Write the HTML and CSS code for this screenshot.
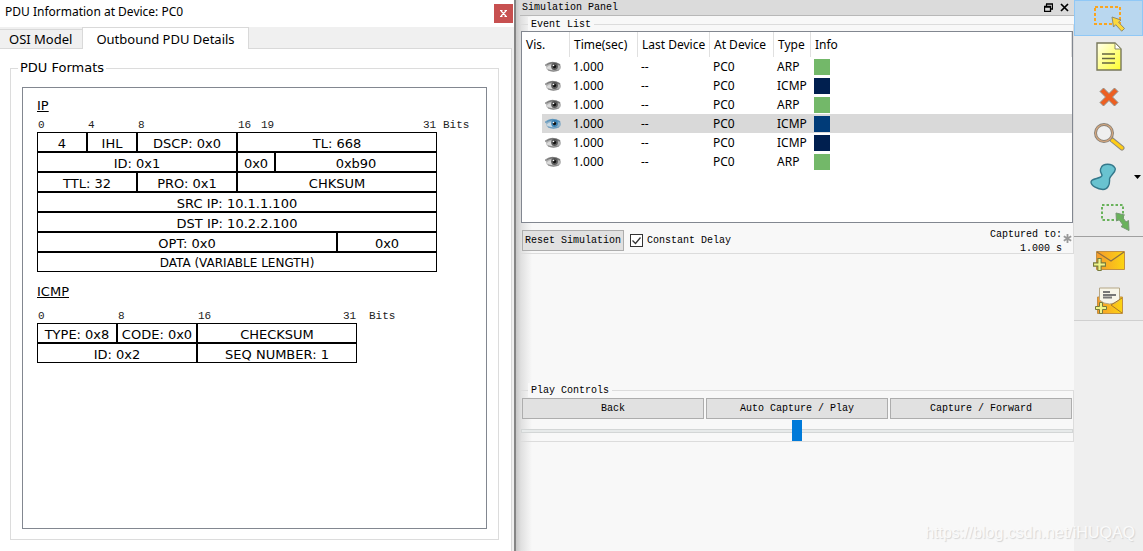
FILE: index.html
```html
<!DOCTYPE html>
<html lang="en">
<head>
<meta charset="utf-8">
<title>Simulation Panel</title>
<link rel="stylesheet" href="styles.css">
</head>
<body>
<svg class="defs" aria-hidden="true">
  <defs>
    <linearGradient id="note" x1="0" y1="0" x2="1" y2="1"><stop offset="0" stop-color="#fffff0"/><stop offset="1" stop-color="#ffff2a"/></linearGradient>
    <linearGradient id="mail" x1="0" y1="0" x2="1" y2="0"><stop offset="0" stop-color="#f69a2c"/><stop offset="1" stop-color="#fcd512"/></linearGradient>
    <symbol id="eye" viewBox="0 0 16 12">
      <ellipse cx="8.5" cy="6" rx="7.500" ry="5" fill="currentColor" opacity=".4"/>
      <path d="M0 4.500Q7-1 15 4" fill="none" stroke="currentColor" stroke-width="1.600" opacity=".55"/>
      <path d="M1 7Q4 3.500 8 4L7 9Q4 9 1 7Z" fill="#fff" opacity=".5"/>
      <circle cx="9.500" cy="5.500" r="3.400" fill="currentColor" opacity=".8"/>
      <circle cx="9.500" cy="5.500" r="1.700" fill="#111"/>
      <circle cx="8.500" cy="4.500" r=".8" fill="#fff"/>
      <path d="M3 9Q8 11 14 9" fill="none" stroke="currentColor" opacity=".4"/>
    </symbol>
    <symbol id="plus" viewBox="0 0 12 12">
      <path d="M4.500.5h3v4h4v3h-4v4h-3v-4h-4v-3h4z" fill="#eef58a" stroke="#777a3c"/>
    </symbol>
  </defs>
</svg>
<div class="app">
  <section class="dialog">
    <header class="dialog-title">
      <h1>PDU Information at Device: PC0</h1>
      <button class="close" aria-label="Close"><svg width="7" height="7" viewBox="0 0 7 7"><path d="M1 1l5 5M6 1L1 6M0 .5h2.500M4.500.5H7M0 6.500h2.500M4.500 6.500H7" stroke="#fff" stroke-width="1.200"/></svg></button>
    </header>
    <nav class="tabs">
      <button class="tab">OSI Model</button>
      <button class="tab active">Outbound PDU Details</button>
      <span class="tab-rest"></span>
    </nav>
    <div class="pane">
      <fieldset class="group formats">
        <legend>PDU Formats</legend>
        <div class="sheet">
          <h2>IP</h2>
          <div class="ruler ruler-ip"><span>0</span><span>4</span><span>8</span><span>16</span><span>19</span><span>31</span><span>Bits</span></div>
          <table class="packet packet-ip">
            <colgroup><col class="w50"><col class="w50"><col class="w100"><col class="w38"><col class="w62"><col class="w100"></colgroup>
            <tr><td>4</td><td>IHL</td><td>DSCP: 0x0</td><td colspan="3">TL: 668</td></tr>
            <tr><td colspan="3">ID: 0x1</td><td>0x0</td><td colspan="2">0xb90</td></tr>
            <tr><td colspan="2">TTL: 32</td><td>PRO: 0x1</td><td colspan="3">CHKSUM</td></tr>
            <tr><td colspan="6">SRC IP: 10.1.1.100</td></tr>
            <tr><td colspan="6">DST IP: 10.2.2.100</td></tr>
            <tr><td colspan="5">OPT: 0x0</td><td>0x0</td></tr>
            <tr class="small"><td colspan="6">DATA (VARIABLE LENGTH)</td></tr>
          </table>
          <h2 class="second">ICMP</h2>
          <div class="ruler ruler-icmp"><span>0</span><span>8</span><span>16</span><span>31</span><span>Bits</span></div>
          <table class="packet packet-icmp">
            <colgroup><col class="w80"><col class="w80"><col class="w160"></colgroup>
            <tr><td>TYPE: 0x8</td><td>CODE: 0x0</td><td>CHECKSUM</td></tr>
            <tr><td colspan="2">ID: 0x2</td><td>SEQ NUMBER: 1</td></tr>
          </table>
        </div>
      </fieldset>
    </div>
  </section>

  <section class="sim">
    <header class="sim-title">
      <h1>Simulation Panel</h1>
      <button aria-label="Float"><svg width="9" height="9" viewBox="0 0 9 9"><path d="M2.500 3V1M2 1h7M8.500 1v5H7M.5 3.500h6v5h-6zM0 4h7" fill="none" stroke="#000" stroke-width="1.300"/></svg></button>
      <button aria-label="Close panel"><svg width="9" height="9" viewBox="0 0 9 9"><path d="M1 1l7 7M8 1L1 8" stroke="#000" stroke-width="1.700"/></svg></button>
    </header>
    <fieldset class="group events">
      <legend>Event List</legend>
      <div class="list">
        <table class="event-table">
          <colgroup><col class="c-vis"><col class="c-time"><col class="c-last"><col class="c-at"><col class="c-type"><col></colgroup>
          <thead><tr><th>Vis.</th><th>Time(sec)</th><th>Last Device</th><th>At Device</th><th>Type</th><th>Info</th></tr></thead>
          <tbody>
            <tr><td><svg class="eye"><use href="#eye"/></svg></td><td>1.000</td><td>--</td><td>PC0</td><td>ARP</td><td><span class="swatch green"></span></td></tr>
            <tr><td><svg class="eye"><use href="#eye"/></svg></td><td>1.000</td><td>--</td><td>PC0</td><td>ICMP</td><td><span class="swatch navy"></span></td></tr>
            <tr><td><svg class="eye"><use href="#eye"/></svg></td><td>1.000</td><td>--</td><td>PC0</td><td>ARP</td><td><span class="swatch green"></span></td></tr>
            <tr class="selected"><td><svg class="eye"><use href="#eye"/></svg></td><td>1.000</td><td>--</td><td>PC0</td><td>ICMP</td><td><span class="swatch blue"></span></td></tr>
            <tr><td><svg class="eye"><use href="#eye"/></svg></td><td>1.000</td><td>--</td><td>PC0</td><td>ICMP</td><td><span class="swatch navy"></span></td></tr>
            <tr><td><svg class="eye"><use href="#eye"/></svg></td><td>1.000</td><td>--</td><td>PC0</td><td>ARP</td><td><span class="swatch green"></span></td></tr>
          </tbody>
        </table>
      </div>
      <div class="event-foot">
        <button class="push">Reset Simulation</button>
        <label class="check"><input type="checkbox" checked><span>Constant Delay</span></label>
        <p class="captured">Captured to:<br>1.000 s</p>
        <svg class="star" width="9" height="9" viewBox="0 0 9 9"><path d="M4.500 0v9M.8 2.200l7.400 4.600M8.200 2.200L.8 6.800" stroke="#999" stroke-width="1.800"/></svg>
      </div>
    </fieldset>
    <fieldset class="group play">
      <legend>Play Controls</legend>
      <div class="play-buttons">
        <button class="push">Back</button>
        <button class="push">Auto Capture / Play</button>
        <button class="push">Capture / Forward</button>
      </div>
      <input class="speed" type="range" min="0" max="100" value="50" aria-label="Play speed">
    </fieldset>
  </section>

  <aside class="side">
    <div class="tools">
      <button class="tool current" aria-label="Select"><svg width="32" height="30" viewBox="0 0 32 30"><rect x="2" y="4" width="25" height="17" fill="none" stroke="#faa51e" stroke-width="2" stroke-dasharray="3 2"/><path d="M19 14l9 3-2.500 2.200 6 6.300-2.800 2.700-6-6.500-2.200 2.300z" fill="#fbd83c" stroke="#8f8b70"/></svg></button>
      <button class="tool" aria-label="Place Note"><svg width="26" height="30" viewBox="0 0 26 30"><path d="M1 1h18l6 6v21H1z" fill="url(#note)" stroke="#77775a" stroke-width="1.400"/><path d="M19 1v6h6z" fill="#fff" stroke="#8b8b62"/><path d="M6 12h13M6 16.500h13M6 21h13" stroke="#666642" stroke-width="1.500"/></svg></button>
      <button class="tool" aria-label="Delete"><svg width="20" height="20" viewBox="0 0 20 20"><path d="M1 4.500L4.500 1 10 6.500 15.500 1 19 4.500 13.500 10l5.500 5.500-3.500 3.500-5.500-5.500L4.500 19 1 15.500 6.500 10z" fill="#ed5f21" stroke="#94938c"/></svg></button>
      <button class="tool" aria-label="Inspect"><svg width="32" height="30" viewBox="0 0 32 30"><path d="M18 17l11 9" stroke="#8e887d" stroke-width="5" stroke-linecap="round"/><path d="M19 18l10 8" stroke="#ffcd16" stroke-width="3" stroke-linecap="round"/><circle cx="11" cy="11" r="8.500" fill="#efefef" stroke="#888278" stroke-width="3"/><circle cx="11" cy="11" r="8.500" fill="none" stroke="#d8a77d" stroke-width="1.200"/></svg></button>
      <button class="tool shape" aria-label="Draw Shape"><svg width="26" height="28" viewBox="0 0 26 28"><path d="M11 5C13 0 22 0 25 5C27 9 20 12 19.500 16C20 21 18 26.500 13 26.500C8 26 1 23 1 19C1 15 11 16 12 12.500C12 10 9 9 11 5Z" fill="#69c3d0" stroke="#34788b" stroke-width="1.400"/></svg><svg class="arrow" width="7" height="4" viewBox="0 0 7 4"><path d="M0 0h7L3.500 4z"/></svg></button>
      <button class="tool resize" aria-label="Resize"><svg width="30" height="30" viewBox="0 0 30 30"><path d="M2 3h21v15H2z" fill="none" stroke="#69b25b" stroke-width="2" stroke-dasharray="2.500 2"/><path d="M16 11l8.500 2-2.200 2 3.700 5 2.500-1.500.5 10-8-4 2-1.500-4-5.500-2.500 1.500z" fill="#69b25b" stroke="#769873"/></svg></button>
    </div>
    <div class="tools pdus">
      <button class="tool" aria-label="Add Simple PDU"><svg width="32" height="22" viewBox="0 0 32 22"><path d="M3.500 1.500h28v18h-28z" fill="url(#mail)" stroke="#c29043"/><path d="M4 2l14 9L31 2" fill="none" stroke="#8e7043" stroke-width="1.200"/><use href="#plus" x="0" y="8" width="13" height="13"/></svg></button>
      <button class="tool" aria-label="Add Complex PDU"><svg width="30" height="28" viewBox="0 0 30 28"><path d="M3.500 10h25v16.500h-25z" fill="url(#mail)" stroke="#c29043"/><path d="M5.500 1h20v12q-4 4-10 4T5.500 13z" fill="#f7f5e9" stroke="#b5a787"/><path d="M9 5h7M9 8h13M9 10.500h9" stroke="#777" stroke-width="1.800"/><path d="M17 18l11 8M17 18l11-7" stroke="#a77728"/><use href="#plus" x="1" y="15" width="12" height="12"/></svg></button>
    </div>
  </aside>
</div>
<p class="watermark">https://blog.csdn.net/iHUQAQ</p>
</body>
</html>
```
FILE: styles.css
```css
* { box-sizing: border-box; }
body {
  margin: 0;
  background: #f8f8f8;
  color: #000;
  font-family: "DejaVu Sans", sans-serif;
  font-size: 12px;
}
h1, h2, p { margin: 0; font-weight: normal; }
button { margin: 0; padding: 0; border: 0; background: none; color: inherit; font: inherit; }
svg { display: block; }
.defs { position: absolute; width: 0; height: 0; }

.app {
  display: grid;
  grid-template-columns: minmax(0, 516fr) minmax(0, 558fr) 69px;
  min-height: 100vh;
}

/* PDU dialog */
.dialog {
  display: flex;
  flex-direction: column;
  background: #f0f0f0;
  border-right: 2px solid #858585;
}
.dialog-title {
  display: flex;
  justify-content: space-between;
  align-items: flex-start;
  height: 27px;
  padding: 4px 1px 0 5px;
  background: #fff;
}
.dialog-title h1 { font: 12px/16px "Noto Sans", sans-serif; }
.close {
  display: grid;
  place-items: center;
  width: 19px;
  height: 19px;
  background: #c75050;
}
.tabs { display: flex; align-items: flex-end; height: 22px; padding-right: 2px; }
.tab {
  height: 20px;
  padding: 0 10px 0 9px;
  border: solid #d9d9d9;
  border-width: 1px 0;
  font: 13px/18px "Noto Sans", sans-serif;
}
.tab.active {
  height: 22px;
  padding: 0 13px;
  border-width: 1px 1px 0;
  background: #fff;
}
.tab-rest { flex: 1; border-bottom: 1px solid #d9d9d9; }
.pane {
  display: flex;
  flex: 1;
  margin-right: 2px;
  padding: 10px 12px 11px 10px;
  border-right: 1px solid #d9d9d9;
  background: #fff;
}
.group { min-width: 0; margin: 0; padding: 0; border: 1px solid #dcdcdc; }
.formats { display: flex; flex: 1; }
.formats legend { margin-left: 7px; padding: 0 2px; font: 13px/18px "DejaVu Sans", sans-serif; }
.sheet { flex: 1; margin: 10px 11px; padding: 9px 14px; border: 1px solid #828790; }
.sheet h2 { font-size: 13px; line-height: 18px; text-decoration: underline; }
.sheet .second { margin-top: 11px; }
.ruler {
  display: grid;
  padding: 0 1px;
  color: #222;
  font: 11px/14px "Liberation Mono", monospace;
}
.ruler-ip { grid-template-columns: 50px 50px 100px 23px 162px 20px auto; margin-top: 3px; }
.ruler-icmp { grid-template-columns: 80px 80px 145px 26px auto; margin-top: 8px; }
.packet { table-layout: fixed; border-collapse: separate; border-spacing: 0; }
.packet-ip { width: 400px; }
.packet-icmp { width: 320px; }
.packet td {
  height: 20px;
  padding: 4px 0 0;
  border: 1px solid #000;
  font-size: 13px;
  line-height: 14px;
  text-align: center;
  white-space: nowrap;
}
.packet .small td { padding: 3px 0 1px; font-size: 12px; }
.w38 { width: 38px; }
.w50 { width: 50px; }
.w62 { width: 62px; }
.w80 { width: 80px; }
.w100 { width: 100px; }
.w160 { width: 160px; }

/* Simulation panel */
.sim {
  padding-left: 4px;
  background: linear-gradient(90deg, #c8c8c8, #e0e0e0 5px, #f8f8f8 16px);
  font: 10px/14px "Liberation Mono", monospace;
}
.sim-title {
  display: flex;
  align-items: center;
  gap: 7px;
  height: 16px;
  padding: 0 5px 1px 2px;
  background: #dbdbdb;
  border-bottom: 1px solid #b8b8b8;
}
.sim-title h1 { flex: 1; padding-top: 1px; font-size: 10px; }
.events { margin-top: 1px; }
.sim legend { margin-left: 7px; padding: 1px 3px 0; background: #f8f8f8; line-height: 13px; }
.list { min-height: 192px; border: 1px solid #828790; background: #fff; }
.event-table {
  width: 100%;
  table-layout: fixed;
  border-spacing: 0;
  font: 12px/18px "Noto Sans", sans-serif;
}
.event-table th {
  height: 25px;
  padding: 0 0 0 4px;
  border-right: 1px solid #e0e0e0;
  font-weight: normal;
  text-align: left;
  white-space: nowrap;
}
.event-table td { height: 19px; padding: 0 0 0 3px; }
.event-table td:first-child { border-left: 20px solid transparent; background-clip: padding-box; }
.c-vis { width: 48px; }
.c-time { width: 68px; }
.c-last { width: 72px; }
.c-at { width: 64px; }
.c-type { width: 37px; }
.selected td { background-color: #d9d9d9; }
.eye { width: 16px; height: 12px; color: #444; }
.selected .eye { color: #2878b0; }
.swatch { display: block; width: 16px; height: 16px; }
.green { background: #73b869; }
.navy { background: #001f4f; }
.blue { background: #003b78; }
.event-foot { display: flex; align-items: flex-start; height: 30px; padding: 7px 1px 0; }
.push {
  height: 21px;
  border: 1px solid #adadad;
  background: #e1e1e1;
  line-height: 19px;
}
.event-foot .push { width: 102px; }
.check { display: flex; align-items: center; gap: 4px; height: 21px; margin-left: 6px; }
.check input {
  appearance: none;
  width: 13px;
  height: 13px;
  margin: 0;
  border: 1px solid #333;
  background: #fff;
}
.check input:checked {
  background-image: url("data:image/svg+xml,%3Csvg xmlns='http://www.w3.org/2000/svg' viewBox='0 0 11 11'%3E%3Cpath d='M1.500 5.500l3 3 5-6' fill='none' stroke='%23333' stroke-width='1.300'/%3E%3C/svg%3E");
}
.captured { margin: -2px 1px 0 auto; text-align: right; }
.star { margin-top: 4px; }
.play { margin-top: 129px; }
.play-buttons { display: grid; grid-template-columns: repeat(3, 1fr); gap: 2px; padding: 1px; }
.speed { display: block; appearance: none; width: 100%; height: 21px; margin: 0; background: none; }
.speed::-webkit-slider-runnable-track { height: 4px; border: 1px solid #d3d6d6; background: #e7eaea; }
.speed::-webkit-slider-thumb {
  appearance: none;
  width: 10px;
  height: 21px;
  margin-top: -10px;
  background: #007ad9;
}

/* Tool strip */
.side { background: #efefef; }
.tools { background: #eaeaea; border-bottom: 1px solid #a0a0a0; }
.pdus { padding-top: 3px; border-color: #d0d0d0; }
.tool {
  position: relative;
  display: grid;
  place-items: center;
  width: 100%;
  height: 40px;
  padding-top: 2px;
}
.tool.current { height: 36px; padding-top: 0; border: 1px solid #90c8f6; background: #b9d7ef; }
.shape { padding-right: 11px; }
.resize { padding-left: 12px; }
.arrow { position: absolute; right: 2px; top: 19px; }
.watermark {
  position: absolute;
  right: 8px;
  bottom: 8px;
  color: #fafafa;
  font: 16px/20px "Liberation Sans", sans-serif;
  text-shadow: 1px 1px 1px #d4d4d4;
}
```
